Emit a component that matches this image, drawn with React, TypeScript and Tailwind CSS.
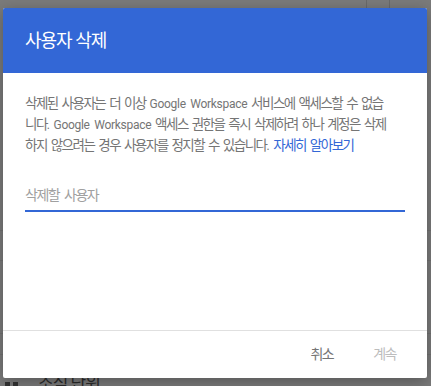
const font = { fontFamily: "Roboto, 'Noto Sans CJK KR', sans-serif" };

function BackdropRow({ h, children }: { h: string; children?: React.ReactNode }) {
  return (
    <div className={`flex shrink-0 border-b border-[#727272] ${h}`}>
      <div className="flex flex-1 items-end">{children}</div>
      <div className="w-[23px] border-l border-[#6a6a6a]" />
      <div className="w-[42px] border-l border-[#6a6a6a]" />
    </div>
  );
}

function Backdrop() {
  return (
    <div className="flex h-full flex-col bg-[#7b7b7b]">
      <BackdropRow h="h-[231px]" />
      <BackdropRow h="h-[30px]" />
      <BackdropRow h="h-[73px]" />
      <BackdropRow h="h-[21px]" />
      <div className="flex flex-1 items-end gap-[20px] pl-[5px]">
        <div className="flex gap-[3px]">
          <span className="h-[4px] w-[5px] bg-[#333]" />
          <span className="h-[4px] w-[5px] bg-[#333]" />
        </div>
        <div className="-mb-[9px] text-[17px] leading-[24px] tracking-[-1px] text-[#2b2b2b]">소식 단위</div>
      </div>
    </div>
  );
}

function Latin({ children }: { children: React.ReactNode }) {
  return <span className="text-[12px] tracking-[-0.3px]">{children}</span>;
}

function DeleteUserDialog() {
  return (
    <div className="absolute left-[3px] top-[8px] flex h-[370px] w-[424px] flex-col overflow-hidden rounded-[2px] bg-white shadow-[0_4px_16px_rgba(0,0,0,0.3)]">
      <div className="flex h-[65px] shrink-0 items-center bg-[#3367d6] px-[22px]">
        <h2 className="text-[18px] font-normal tracking-[-1px] text-white">사용자 삭제</h2>
      </div>

      <div className="flex-1 px-[22px] pt-[20px]">
        <p className="whitespace-nowrap text-[13.5px] leading-[20px] tracking-[-1.5px] text-[#757575] [word-spacing:2px]">
          <span className="block">
            삭제된 사용자는 더 이상 <Latin>Google Workspace</Latin> 서비스에 액세스할 수 없습
          </span>
          <span className="block">
            니다<Latin>.</Latin> <Latin>Google Workspace</Latin> 액세스 권한을 즉시 삭제하려 하나 계정은 삭제
          </span>
          <span className="block">
            하지 않으려는 경우 사용자를 정지할 수 있습니다<Latin>.</Latin>{" "}
            <a className="text-[#3367d6]">자세히 알아보기</a>
          </span>
        </p>

        <div className="mt-[27px] border-b-2 border-[#3367d6] pb-[3px]">
          <input
            placeholder="삭제할 사용자"
            className="h-[22px] w-full bg-transparent text-[14px] tracking-[-1.5px] text-[#212121] outline-none [word-spacing:3px] placeholder:text-[#a0a0a0]"
            style={font}
          />
        </div>
      </div>

      <div className="flex h-[48px] shrink-0 items-center justify-end gap-[40px] border-t border-[#e0e0e0] pr-[31px]">
        <button type="button" className="text-[14px] tracking-[-1.5px] text-[#757575]" style={font}>
          취소
        </button>
        <button type="button" className="text-[14px] tracking-[-1.5px] text-[#bdbdbd]" style={font} disabled>
          계속
        </button>
      </div>
    </div>
  );
}

export default function App() {
  return (
    <div className="relative h-[386px] w-[431px] overflow-hidden" style={font}>
      <Backdrop />
      <DeleteUserDialog />
    </div>
  );
}
